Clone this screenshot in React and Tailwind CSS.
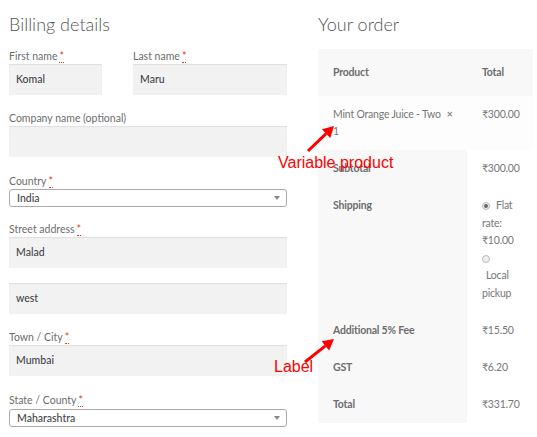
import React from 'react';

const Req = () => (
  <abbr className="text-[#e2401c] no-underline border-b border-dotted border-[#e2401c] ml-[2px] leading-none" title="required">*</abbr>
);

const Label = ({ children, req }) => (
  <label className="block h-[16px] text-[10.5px] leading-[16px] text-[#6d6d6d]">
    {children}
    {req && <Req />}
  </label>
);

const Input = ({ value, className = '' }) => (
  <div className={`h-[31px] bg-[#f2f2f2] shadow-[inset_0_1px_1px_rgba(0,0,0,0.08)] px-[7px] flex items-center text-[10.5px] text-[#43454b] font-medium ${className}`}>
    {value}
  </div>
);

const Select = ({ value }) => (
  <div className="h-[18px] border border-[#aaa] rounded-[3px] bg-white pl-[7px] pr-[6px] flex items-center justify-between text-[10.5px] text-[#43454b] font-medium">
    <span>{value}</span>
    <span className="w-0 h-0 border-l-[3px] border-r-[3px] border-t-[4px] border-l-transparent border-r-transparent border-t-[#888]" />
  </div>
);

const Field = ({ label, req, children, mb = 'mb-[15px]', className = '' }) => (
  <div className={`${mb} ${className}`}>
    <Label req={req}>{label}</Label>
    {children}
  </div>
);

const Radio = ({ checked }) => (
  <span className="inline-flex w-[8px] h-[8px] rounded-full border border-[#bbb] bg-[#eee] items-center justify-center align-middle">
    {checked && <span className="w-[4px] h-[4px] rounded-full bg-[#666]" />}
  </span>
);

const Arrow = ({ x1, y1, x2, y2 }) => {
  const a = Math.atan2(y2 - y1, x2 - x1);
  const L = 11, W = 6;
  const bx = x2 - L * Math.cos(a), by = y2 - L * Math.sin(a);
  const px = -Math.sin(a) * W, py = Math.cos(a) * W;
  return (
    <g fill="#f00" stroke="#f00">
      <line x1={x1} y1={y1} x2={bx} y2={by} strokeWidth="3" />
      <polygon points={`${x2},${y2} ${bx + px},${by + py} ${bx - px},${by - py}`} strokeWidth="0" />
    </g>
  );
};

export default function App() {
  const th = 'px-[15px] text-left font-bold text-[#6d6d6d]';
  const td = 'px-[15px] text-left font-normal text-[#777]';
  return (
    <div className="relative w-[537px] h-[437px] overflow-hidden bg-white font-['Lato','Open_Sans',sans-serif] text-[10.5px] leading-[17px]">
      <div className="flex pt-[12px]">
        {/* Billing */}
        <div className="ml-[9px] w-[278px]">
          <h3 className="h-[24px] text-[18px] leading-[24px] font-light text-[#555] mb-[12px]">Billing details</h3>
          <div className="flex gap-[31px] mb-[15px]">
            <div className="w-[93px]">
              <Label req>First name</Label>
              <Input value="Komal" />
            </div>
            <div className="w-[154px]">
              <Label req>Last name</Label>
              <Input value="Maru" />
            </div>
          </div>
          <Field label="Company name (optional)" mb="mb-[16px]">
            <Input value="" />
          </Field>
          <Field label="Country" req mb="mb-[14px]">
            <Select value="India" />
          </Field>
          <Field label="Street address" req>
            <Input value="Malad" />
          </Field>
          <Input value="west" className="mb-[15px]" />
          <Field label="Town / City" req mb="mb-[16px]">
            <Input value="Mumbai" />
          </Field>
          <div>
            <Label req>State / County</Label>
            <div className="pt-[1px]">
              <Select value="Maharashtra" />
            </div>
          </div>
        </div>

        {/* Order */}
        <div className="ml-[31px] w-[215px]">
          <h3 className="h-[24px] text-[18px] leading-[24px] font-light text-[#555] mb-[13px]">Your order</h3>
          <table className="w-[215px] border-collapse table-fixed tracking-[-0.2px]">
            <colgroup>
              <col className="w-[149px]" />
              <col className="w-[66px]" />
            </colgroup>
            <thead>
              <tr className="bg-[#f8f8f8] h-[47px]">
                <th className={th}>Product</th>
                <th className={th}>Total</th>
              </tr>
            </thead>
            <tbody>
              <tr className="bg-[#fdfdfd] h-[54px]">
                <td className={`${td} align-top pt-[10px]`}>
                  <div className="whitespace-nowrap">
                    Mint Orange Juice - Two<strong className="font-bold text-[#888] ml-[6px]">×</strong>
                  </div>
                  <div>1</div>
                </td>
                <td className={`${td} align-top pt-[10px]`}>₹300.00</td>
              </tr>
            </tbody>
            <tfoot>
              <tr className="h-[37px]">
                <th className={`${th} bg-[#f8f8f8]`}>Subtotal</th>
                <td className={td}>₹300.00</td>
              </tr>
              <tr className="h-[125px]">
                <th className={`${th} bg-[#f8f8f8] align-top pt-[10px]`}>Shipping</th>
                <td className={`${td} align-top pt-[10px] pr-0`}>
                  <div className="leading-[17.5px]">
                    <div className="whitespace-nowrap"><Radio checked /><span className="ml-[6px]">Flat</span></div>
                    <div>rate:</div>
                    <div>₹10.00</div>
                    <div><Radio /></div>
                    <div className="pl-[4px]">Local</div>
                    <div>pickup</div>
                  </div>
                </td>
              </tr>
              <tr className="h-[37px]">
                <th className={`${th} bg-[#f8f8f8]`}>Additional 5% Fee</th>
                <td className={td}>₹15.50</td>
              </tr>
              <tr className="h-[37px]">
                <th className={`${th} bg-[#f8f8f8]`}>GST</th>
                <td className={td}>₹6.20</td>
              </tr>
              <tr className="h-[37px]">
                <th className={`${th} bg-[#f8f8f8]`}>Total</th>
                <td className={`${td} font-bold text-[#6d6d6d]`}>₹331.70</td>
              </tr>
            </tfoot>
          </table>
        </div>
      </div>

      {/* Annotations */}
      <span className="absolute left-[278px] top-[153px] text-[16px] leading-[20px] text-[#f00] font-['Liberation_Sans',Arial,sans-serif]">Variable product</span>
      <span className="absolute left-[274px] top-[357px] text-[16px] leading-[20px] text-[#f00] font-['Liberation_Sans',Arial,sans-serif]">Label</span>
      <svg className="absolute inset-0 pointer-events-none" width="537" height="437">
        <Arrow x1={308} y1={151} x2={334} y2={126} />
        <Arrow x1={305} y1={362} x2={334} y2={339} />
      </svg>
    </div>
  );
}
